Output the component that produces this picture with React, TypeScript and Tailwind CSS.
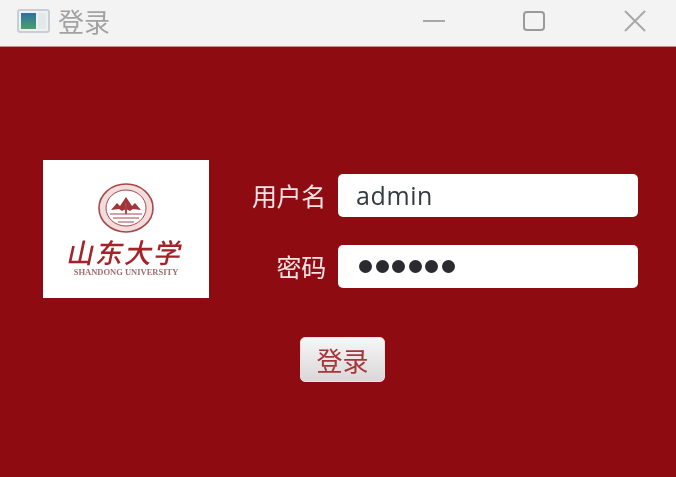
const cjk = { fontFamily: '"Noto Sans CJK SC", sans-serif' }

function WindowIcon() {
  return (
    <div className="w-[33px] h-[24px] rounded-[3px] border-2 border-[#c9ced3] bg-[#eef0f1] flex p-[2px] gap-[2px] blur-[0.4px]">
      <div className="w-[15px] h-full bg-gradient-to-b from-[#2f6f9e] to-[#4f9e66]" />
      <div className="flex-1 bg-[#e3e8ea]" />
    </div>
  )
}

function Seal() {
  return (
    <svg width="56" height="50" viewBox="0 0 56 50" fill="none" stroke="#a8474b">
      <ellipse cx="28" cy="25" rx="27" ry="24" strokeWidth="1.6" fill="#f3dcdc" />
      <ellipse cx="28" cy="25" rx="20" ry="18" strokeWidth="1" fill="#ffffff" />
      <path d="M13 27l6-7 3 3 6-9 6 9 3-3 6 7-8-1-3 2-4-2-4 2-3-2z" fill="#a0353a" stroke="none" />
      <path d="M28 20v11" strokeWidth="2" />
      <path d="M12 31h32M15 35h26M20 39h16" strokeWidth="1.2" />
    </svg>
  )
}

function Logo() {
  return (
    <div className="w-[166px] h-[138px] bg-white flex flex-col items-center pt-[23px] blur-[0.6px]">
      <Seal />
      <div
        className="text-[#a32329] text-[27px] leading-[30px] tracking-[2px] mt-[4px] -skew-x-12 font-medium whitespace-nowrap"
        style={cjk}
      >
        山东大学
      </div>
      <div className="text-[#9c7072] text-[8.5px] leading-[8px] mt-[1px] font-['Liberation_Serif',serif] font-bold whitespace-nowrap">
        SHANDONG UNIVERSITY
      </div>
    </div>
  )
}

function Field({ label, value, dots }: { label: string; value?: string; dots?: boolean }) {
  return (
    <div className="flex items-center gap-3">
      <div className="w-[88px] whitespace-nowrap text-right text-[#f5e4e4] text-[25px] leading-none blur-[0.4px] tracking-[-0.3px]" style={cjk}>
        {label}
      </div>
      <div className="w-[300px] h-[43px] bg-white rounded-[5px] flex items-center pl-[18px] text-[#333a40] blur-[0.4px]">
        {dots ? (
          <div className="flex gap-[3.5px] ml-[3px]">
            {[0, 1, 2, 3, 4, 5].map((i) => (
              <span key={i} className="size-[13px] rounded-full bg-[#2b2b2f]" />
            ))}
          </div>
        ) : (
          <span className="text-[25px] tracking-[0.6px] font-['Open_Sans',sans-serif]">{value}</span>
        )}
      </div>
    </div>
  )
}

export default function App() {
  return (
    <div className="w-[676px] h-[477px] flex flex-col overflow-hidden bg-[#8f0b12]">
      <div className="h-[47px] bg-[#f3f3f3] flex items-center pl-[17px] pb-[5px] border-b border-[#c98a8d]">
        <WindowIcon />
        <span className="ml-[8px] text-[26px] leading-none text-[#a2a2a2] blur-[0.5px]" style={cjk}>
          登录
        </span>
        <div className="ml-auto flex items-center text-[#a8a8a8] blur-[0.4px]">
          <svg width="24" height="24" viewBox="0 0 24 24" fill="none" stroke="currentColor" strokeWidth="2" className="mr-[76px]">
            <path d="M1 12h22" />
          </svg>
          <svg width="24" height="24" viewBox="0 0 24 24" fill="none" stroke="#9a9a9a" strokeWidth="2" className="mr-[77px]">
            <rect x="2" y="3" width="20" height="18" rx="3" />
          </svg>
          <svg width="24" height="24" viewBox="0 0 24 24" fill="none" stroke="currentColor" strokeWidth="2" className="mr-[29px]">
            <path d="M2 2l20 20M22 2L2 22" />
          </svg>
        </div>
      </div>
      <div className="flex-1 flex flex-col pt-[113px]">
        <div className="flex pl-[43px]">
          <Logo />
          <div className="flex flex-col gap-[28px] pt-[14px] ml-[29px]">
            <Field label="用户名" value="admin" />
            <Field label="密码" dots />
          </div>
        </div>
        <div className="pl-[300px] mt-[39px]">
          <button
            className="w-[85px] h-[45px] rounded-[5px] border border-[#e8e2e2] bg-gradient-to-b from-[#f7f6f6] to-[#d9d7d7] text-[#a8343a] text-[26px] leading-none blur-[0.4px]"
            style={cjk}
          >
            登录
          </button>
        </div>
      </div>
    </div>
  )
}
